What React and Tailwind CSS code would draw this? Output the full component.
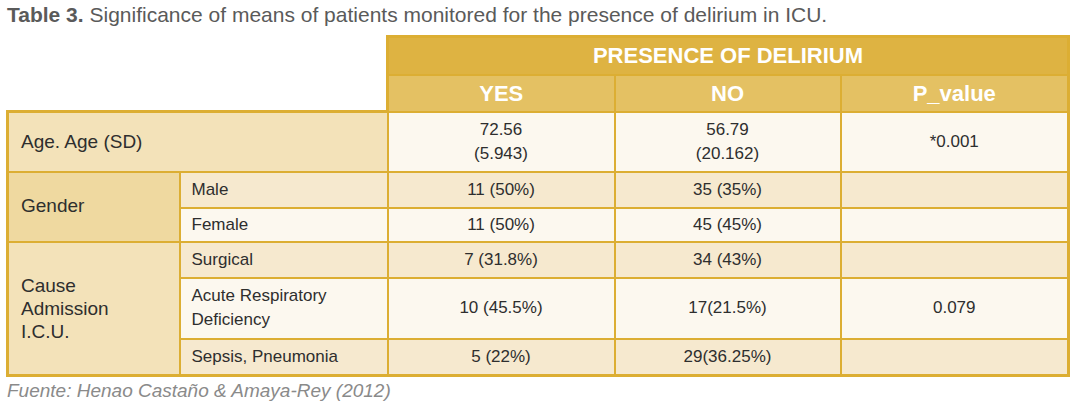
import React from 'react';

const font = { fontFamily: '"Liberation Sans", Arial, sans-serif' };

const tan = 'bg-[#f6e9cf]';
const cream = 'bg-[#fcf8ef]';
const cell = 'border-2 border-[#dcae33] text-center align-middle';
const first = 'border-l-[3px]';
const last = 'border-r-[3px]';

export default function App() {
    return (
        <div className="w-[1073px] h-[405px] bg-white text-[#2e2e2e]" style={font}>
            <p className="pl-[7px] pt-[3px] text-[21px] leading-[24px] text-[#5a5a5a]">
                <span className="font-bold">Table 3.</span> Significance of means of patients monitored for the presence of delirium in ICU.
            </p>

            <table className="ml-[6px] mt-[8px] w-[1061px] table-fixed border-collapse text-[17px]">
                <colgroup>
                    <col className="w-[172px]" />
                    <col className="w-[208px]" />
                    <col className="w-[227px]" />
                    <col className="w-[226px]" />
                    <col className="w-[228px]" />
                </colgroup>
                <thead>
                    <tr className="h-[38px]">
                        <th colSpan={2} rowSpan={2} className="bg-white border-0"></th>
                        <th colSpan={3} className="bg-[#deb342] border-[3px] border-b-2 border-[#dcae33] text-white font-bold text-[22px]">
                            PRESENCE OF DELIRIUM
                        </th>
                    </tr>
                    <tr className="h-[37px] bg-[#e4c163] text-white font-bold text-[22px]">
                        <th className={`${cell} border-l-[3px]`}>YES</th>
                        <th className={cell}>NO</th>
                        <th className={`${cell} ${last}`}>P_value</th>
                    </tr>
                </thead>
                <tbody>
                    <tr className="h-[60px]">
                        <td colSpan={2} className={`${cell} ${first} border-t-[3px] bg-[#f3e2b9] text-left pl-[12px] text-[19px]`}>Age. Age (SD)</td>
                        <td className={`${cell} ${cream} leading-[24px]`}>72.56<br />(5.943)</td>
                        <td className={`${cell} ${cream} leading-[24px]`}>56.79<br />(20.162)</td>
                        <td className={`${cell} ${cream} ${last}`}>*0.001</td>
                    </tr>
                    <tr className="h-[36px]">
                        <td rowSpan={2} className={`${cell} ${first} bg-[#efd9a0] text-left pl-[12px] text-[19px]`}>Gender</td>
                        <td className={`${cell} ${tan} text-left pl-[11px]`}>Male</td>
                        <td className={`${cell} ${tan}`}>11 (50%)</td>
                        <td className={`${cell} ${tan}`}>35 (35%)</td>
                        <td className={`${cell} ${tan} ${last}`}></td>
                    </tr>
                    <tr className="h-[34px]">
                        <td className={`${cell} ${cream} text-left pl-[11px]`}>Female</td>
                        <td className={`${cell} ${cream}`}>11 (50%)</td>
                        <td className={`${cell} ${cream}`}>45 (45%)</td>
                        <td className={`${cell} ${cream} ${last}`}></td>
                    </tr>
                    <tr className="h-[36px]">
                        <td rowSpan={3} className={`${cell} ${first} border-b-[3px] bg-[#f3e2b9] text-left pl-[12px] text-[19px] leading-[23px]`}>
                            Cause<br />Admission<br />I.C.U.
                        </td>
                        <td className={`${cell} ${tan} text-left pl-[11px]`}>Surgical</td>
                        <td className={`${cell} ${tan}`}>7 (31.8%)</td>
                        <td className={`${cell} ${tan}`}>34 (43%)</td>
                        <td className={`${cell} ${tan} ${last}`}></td>
                    </tr>
                    <tr className="h-[61px]">
                        <td className={`${cell} ${cream} text-left pl-[11px] leading-[24px]`}>Acute Respiratory<br />Deficiency</td>
                        <td className={`${cell} ${cream}`}>10 (45.5%)</td>
                        <td className={`${cell} ${cream}`}>17(21.5%)</td>
                        <td className={`${cell} ${cream} ${last}`}>0.079</td>
                    </tr>
                    <tr className="h-[37px]">
                        <td className={`${cell} ${tan} border-b-[3px] text-left pl-[11px]`}>Sepsis, Pneumonia</td>
                        <td className={`${cell} ${tan} border-b-[3px]`}>5 (22%)</td>
                        <td className={`${cell} ${tan} border-b-[3px]`}>29(36.25%)</td>
                        <td className={`${cell} ${tan} border-b-[3px] ${last}`}></td>
                    </tr>
                </tbody>
            </table>

            <p className="pl-[7px] pt-[2px] text-[19px] leading-[24px] italic text-[#8a8a8a]">
                Fuente: Henao Castaño &amp; Amaya-Rey (2012)
            </p>
        </div>
    );
}
